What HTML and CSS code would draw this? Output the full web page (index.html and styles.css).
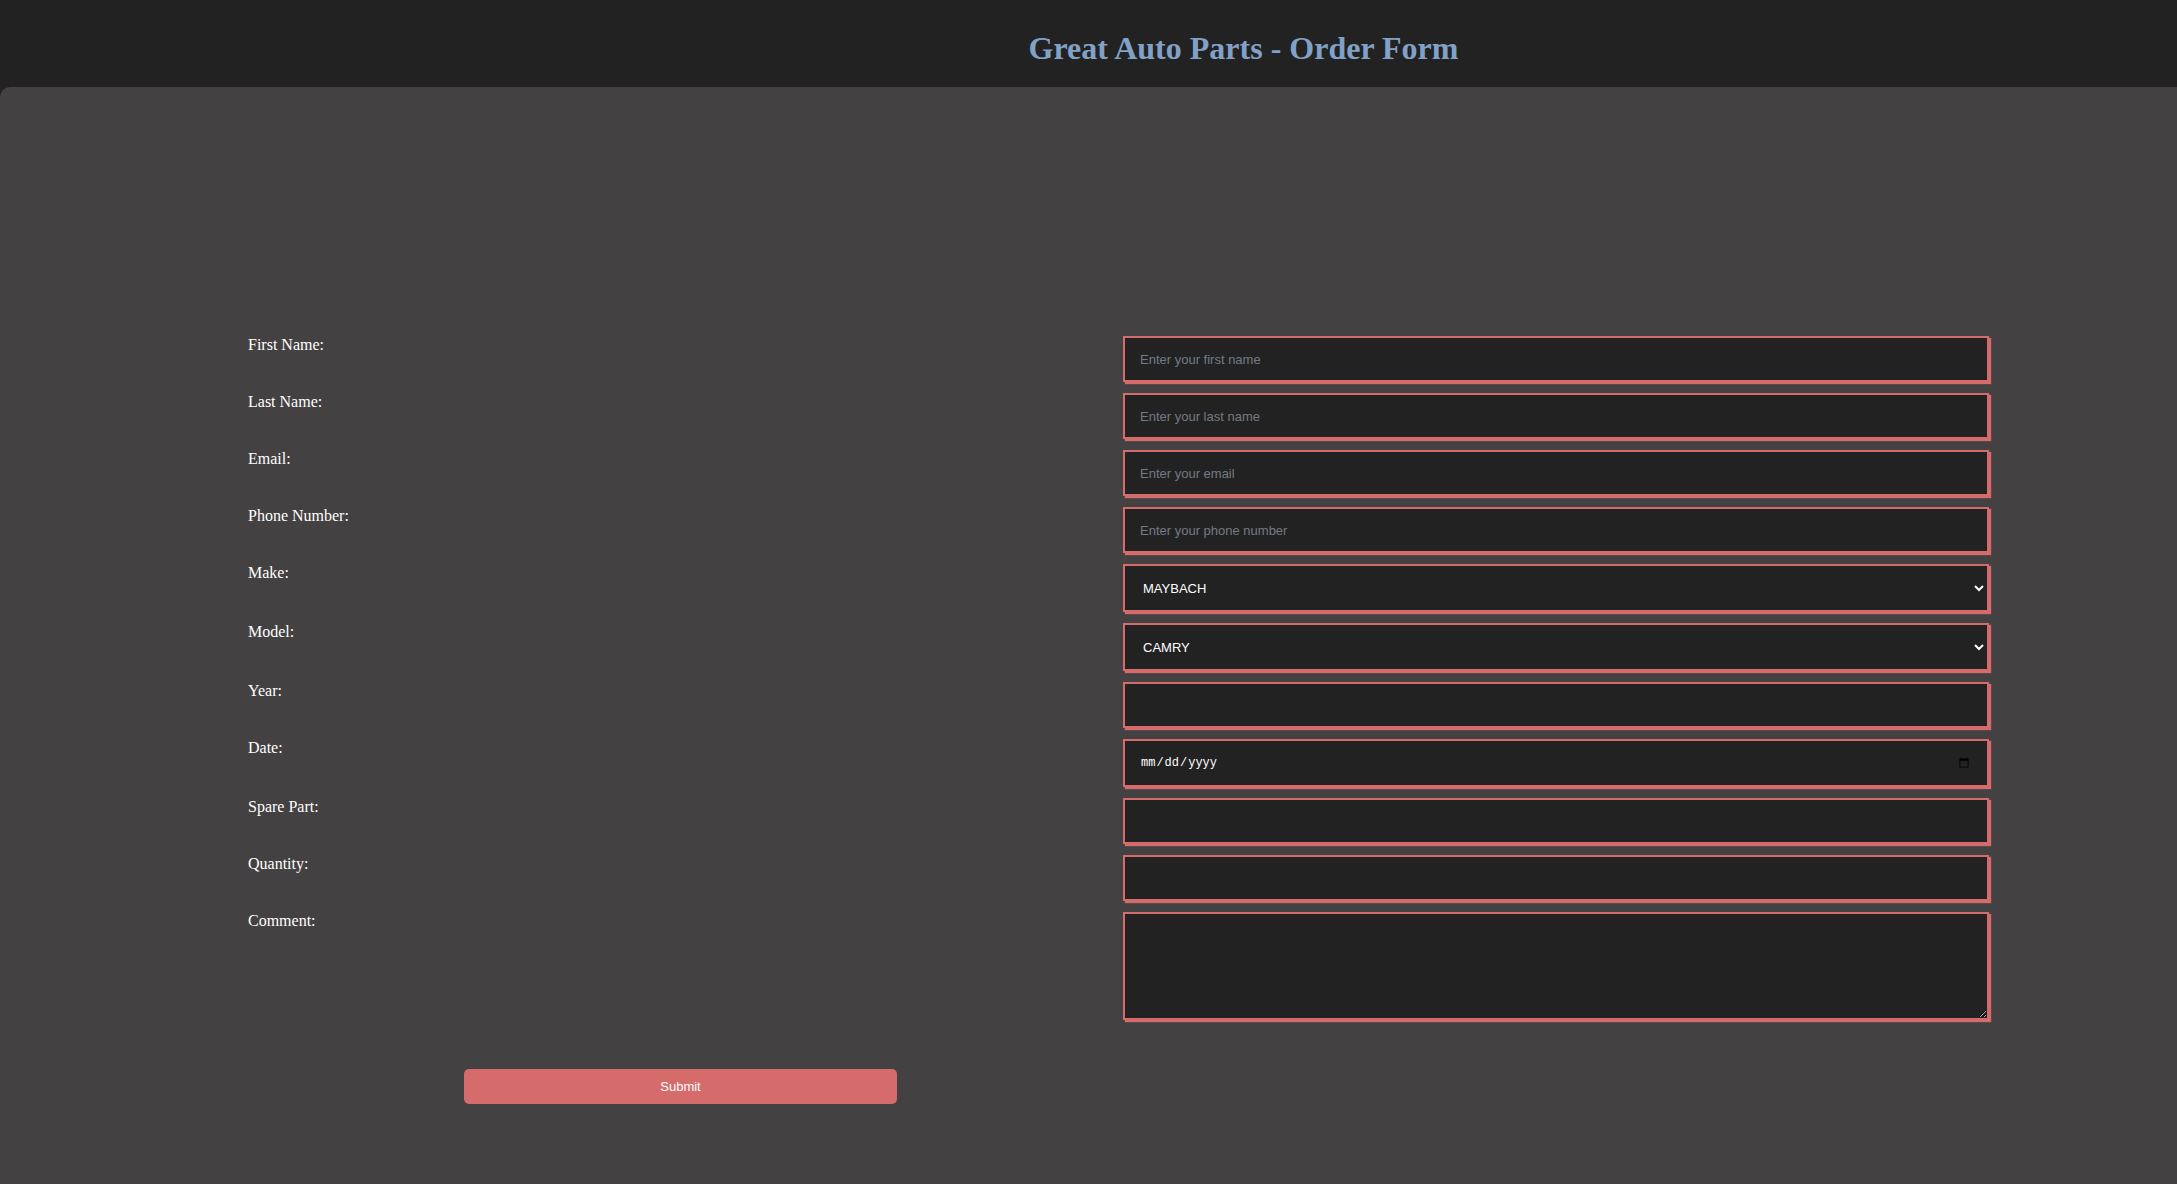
FILE: index.html
```html
<!DOCTYPE html>
<html lang="en">
<head>
<meta charset="utf-8">
<title>Great Auto Parts - Order Form</title>
<link rel="stylesheet" href="styles.css">
</head>
<body>
<header class="site-header">
  <h1 class="site-title">Great Auto Parts - Order Form</h1>
</header>
<main class="main">
  <form class="order-form">
    <label class="field-label" for="fn">First Name:</label>
    <input class="field" id="fn" type="text" placeholder="Enter your first name">

    <label class="field-label" for="ln">Last Name:</label>
    <input class="field" id="ln" type="text" placeholder="Enter your last name">

    <label class="field-label" for="em">Email:</label>
    <input class="field" id="em" type="email" placeholder="Enter your email">

    <label class="field-label" for="ph">Phone Number:</label>
    <input class="field" id="ph" type="tel" placeholder="Enter your phone number">

    <label class="field-label" for="mk">Make:</label>
    <select class="field field-select" id="mk">
      <option>MAYBACH</option>
    </select>

    <label class="field-label" for="md">Model:</label>
    <select class="field field-select" id="md">
      <option>CAMRY</option>
    </select>

    <label class="field-label" for="yr">Year:</label>
    <input class="field" id="yr" type="text">

    <label class="field-label" for="dt">Date:</label>
    <input class="field field-date" id="dt" type="date">

    <label class="field-label" for="sp">Spare Part:</label>
    <input class="field" id="sp" type="text">

    <label class="field-label" for="qt">Quantity:</label>
    <input class="field" id="qt" type="text">

    <label class="field-label" for="cm">Comment:</label>
    <textarea class="field field-area" id="cm"></textarea>

    <button class="submit-btn" type="submit">Submit</button>
  </form>
</main>
</body>
</html>
```

FILE: styles.css
```css
html, body {
  margin: 0;
  padding: 0;
}

body {
  background: #222222;
  font-family: "Liberation Serif", "Times New Roman", serif;
  color: #ffffff;
}

.site-header {
  height: 87px;
  box-sizing: border-box;
  padding: 30px 0 0 310px;
  background: #222222;
  text-align: center;
}

.site-title {
  margin: 0;
  font-family: "Liberation Serif", "Times New Roman", serif;
  font-size: 32px;
  font-weight: bold;
  line-height: 36px;
  color: #82a1c7;
}

.main {
  background: #434142;
  border-top-left-radius: 10px;
  min-height: calc(100vh - 87px);
  box-sizing: border-box;
  padding: 249px 0 40px 248px;
}

.order-form {
  display: grid;
  grid-template-columns: 875px 866px;
  row-gap: 11px;
  align-items: start;
}

.field-label {
  font-size: 16px;
  line-height: 18px;
  color: #ffffff;
  align-self: start;
}

.field {
  box-sizing: border-box;
  width: 866px;
  height: 46px;
  margin: 0;
  padding: 0 15px;
  background: #222222;
  border: 2px solid #d66b6b;
  border-radius: 0;
  box-shadow: 2px 2px 1px #d66b6b;
  color: #ffffff;
  font-family: "Liberation Sans", Arial, sans-serif;
  font-size: 13px;
  outline: none;
}

.field::placeholder {
  color: #737b85;
}

.field-select {
  height: 48px;
  padding: 0 14px;
}

.field-date {
  height: 48px;
  padding: 0 15px;
  font-family: "Liberation Mono", "Courier New", monospace;
  font-size: 12px;
}

.field-area {
  height: 108px;
  padding: 8px 15px;
  resize: vertical;
}

.submit-btn {
  grid-column: 1;
  justify-self: center;
  margin-top: 38px;
  margin-left: -10px;
  width: 433px;
  height: 35px;
  background: #d66b6b;
  border: none;
  border-radius: 5px;
  color: #ffffff;
  font-family: "Liberation Sans", Arial, sans-serif;
  font-size: 13px;
  cursor: pointer;
}
```
